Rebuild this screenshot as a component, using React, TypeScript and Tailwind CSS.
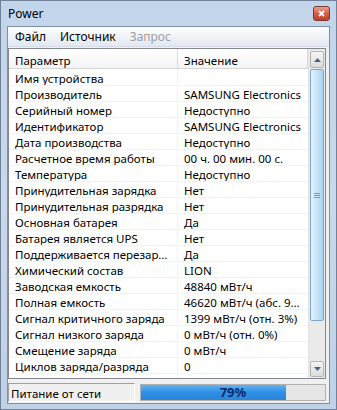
import React from "react";

const rows: [string, string][] = [
  ["Имя устройства", ""],
  ["Производитель", "SAMSUNG Electronics"],
  ["Серийный номер", "Недоступно"],
  ["Идентификатор", "SAMSUNG Electronics"],
  ["Дата производства", "Недоступно"],
  ["Расчетное время работы", "00 ч. 00 мин. 00 с."],
  ["Температура", "Недоступно"],
  ["Принудительная зарядка", "Нет"],
  ["Принудительная разрядка", "Нет"],
  ["Основная батарея", "Да"],
  ["Батарея является UPS", "Нет"],
  ["Поддерживается перезарядка", "Да"],
  ["Химический состав", "LION"],
  ["Заводская емкость", "48840 мВт/ч"],
  ["Полная емкость", "46620 мВт/ч (абс. 95%)"],
  ["Сигнал критичного заряда", "1399 мВт/ч (отн. 3%)"],
  ["Сигнал низкого заряда", "0 мВт/ч (отн. 0%)"],
  ["Смещение заряда", "0 мВт/ч"],
  ["Циклов заряда/разряда", "0"],
  ["Текущая емкость", "36830 мВт/ч (отн. 79%)"],
];

const font = { fontFamily: '"Noto Sans", "Open Sans", sans-serif' };

const Arrow = ({ down }: { down?: boolean }) => (
  <svg width="7" height="4" viewBox="0 0 7 4">
    <path d={down ? "M0 0h7L3.5 4z" : "M0 4h7L3.5 0z"} fill="#4d6185" />
  </svg>
);

const Scrollbar = () => (
  <div className="w-[17px] flex flex-col bg-[#eaeaea] border-l border-[#e3e3e3]">
    <div className="h-[17px] mx-[1px] mt-[2px] flex items-center justify-center border border-[#b5b5b5] rounded-[2px] bg-gradient-to-b from-[#f5f5f5] to-[#dcdcdc]">
      <Arrow />
    </div>
    <div className="h-[252px] mx-[1px] mt-[1px] flex items-center justify-center border border-[#7fa8cc] rounded-[2px] bg-gradient-to-r from-[#e3f1fc] via-[#c9e3f8] to-[#a9d2f2]">
      <div className="flex flex-col gap-[1px]">
        <div className="w-[6px] h-[1px] bg-[#7a9cc0]" />
        <div className="w-[6px] h-[1px] bg-[#7a9cc0]" />
        <div className="w-[6px] h-[1px] bg-[#7a9cc0]" />
      </div>
    </div>
    <div className="flex-1" />
    <div className="h-[16px] mx-[1px] mb-[1px] flex items-center justify-center border border-[#b5b5b5] rounded-[2px] bg-gradient-to-b from-[#f5f5f5] to-[#dcdcdc]">
      <Arrow down />
    </div>
  </div>
);

export default function App() {
  return (
    <div
      className="w-[337px] h-[410px] flex flex-col bg-gradient-to-b from-[#c3d5ea] via-[#c9d9ec] to-[#bfd1e6] border border-[#6f8297] text-[11.5px] text-black"
      style={font}
    >
      {/* title bar */}
      <div className="h-[25px] flex items-center justify-between pl-[7px] pr-[6px]">
        <span className="text-[12px] leading-none mt-[1px]">Power</span>
        <div className="w-[17px] h-[15px] flex items-center justify-center rounded-[3px] border border-[#7a3a2f] bg-gradient-to-b from-[#e8a08f] via-[#d0604a] to-[#c23f28]">
          <svg width="7" height="7" viewBox="0 0 7 7">
            <path d="M1 1l5 5M6 1l-5 5" stroke="#fff" strokeWidth="1.8" />
          </svg>
        </div>
      </div>

      {/* client */}
      <div className="flex-1 mx-[6px] mb-[5px] flex flex-col border border-[#7d90a6] bg-[#f0f0f0]">
        <div className="h-[20px] flex items-center gap-[14px] px-[7px] pt-[1px] text-[12px] bg-gradient-to-b from-[#fdfdfe] to-[#e2e8f1] border-b border-[#d6dde8]">
          <span>Файл</span>
          <span>Источник</span>
          <span className="text-[#a0a0a0]">Запрос</span>
        </div>

        <div className="h-[331px] mt-[1px] mr-[3px] flex border border-[#828790] bg-white overflow-hidden">
          <div className="flex-1 flex flex-col overflow-hidden">
            <div className="h-[20px] flex shrink-0 bg-gradient-to-b from-white to-[#f3f4f6] border-b border-[#d5d5d5]">
              <div className="w-[169px] px-[6px] pt-[4px] flex items-center border-r border-[#dcdcdc]">Параметр</div>
              <div className="flex-1 px-[6px] pt-[4px] flex items-center border-r border-[#dcdcdc]">Значение</div>
            </div>
            <div className="pt-[1px]">
              {rows.map(([k, v]) => (
                <div key={k} className="h-[16px] flex border-b border-[#f3f3f3] leading-[17px]">
                  <div className="w-[169px] px-[6px] truncate border-r border-[#f3f3f3]">{k}</div>
                  <div className="flex-1 min-w-0 px-[6px] truncate">{v}</div>
                </div>
              ))}
            </div>
          </div>
          <Scrollbar />
        </div>

        {/* status bar */}
        <div className="flex-1 flex items-end gap-[5px] pr-[3px] pb-[1px]">
          <div className="w-[127px] h-[19px] flex items-center px-[2px] pt-[2px] border border-t-[#a0a0a0] border-l-[#a0a0a0] border-b-white border-r-white">
            Питание от сети
          </div>
          <div className="flex-1 h-[17px] mb-[1px] relative border border-[#b2b2b2] bg-[#e6e6e6]">
            <div
              className="h-full bg-gradient-to-b from-[#5fb3f4] via-[#2d8fe5] to-[#2a85d8]"
              style={{ width: "79%" }}
            />
            <div className="absolute inset-0 flex items-center justify-center font-bold text-[13px] text-[#0c2a6b]">
              79%
            </div>
          </div>
        </div>
      </div>
    </div>
  );
}
